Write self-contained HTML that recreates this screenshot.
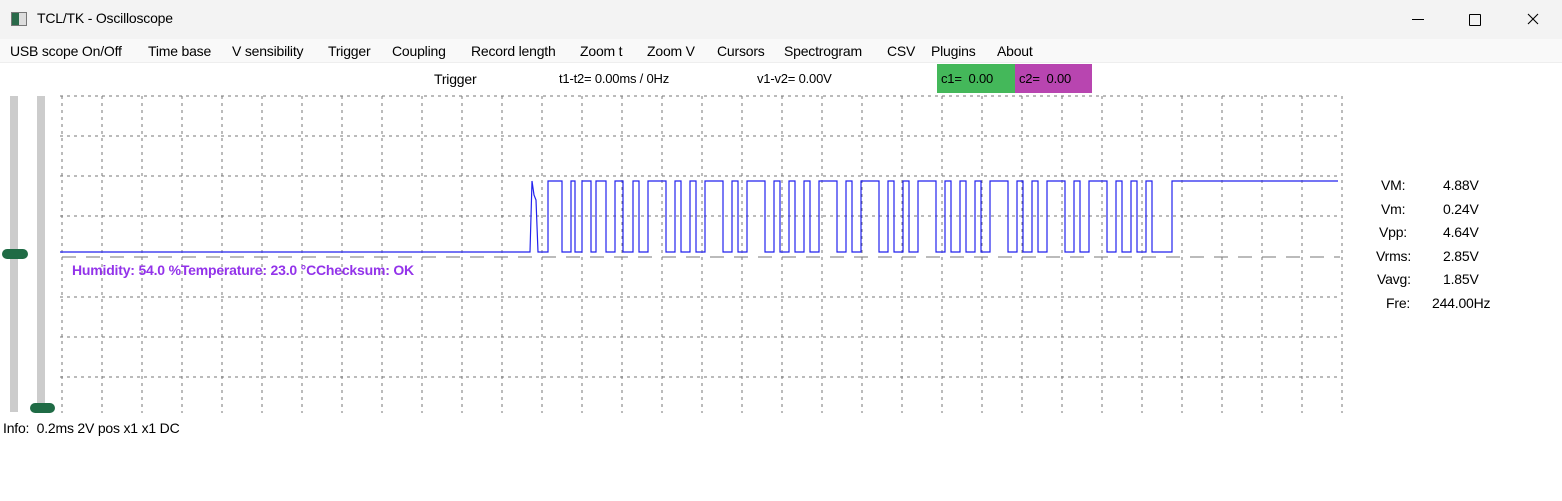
<!DOCTYPE html>
<html><head><meta charset="utf-8"><style>
body{margin:0;width:1562px;height:501px;background:#fff;font-family:"Liberation Sans",sans-serif;overflow:hidden;position:relative}
.t{position:absolute;font-size:14px;color:#000;white-space:nowrap;letter-spacing:-0.2px}
#tb{position:absolute;left:0;top:0;width:1562px;height:39px;background:#f3f3f3}
#mb{position:absolute;left:0;top:39px;width:1562px;height:23px;background:#f9f9f9;border-bottom:1px solid #eee}
</style></head><body>
<div id="tb"></div>
<div style="position:absolute;left:11px;top:12px;width:14px;height:12px;border:1px solid #777;background:#ddd"><div style="width:7px;height:12px;background:#2a6a4a"></div></div>
<div class="t" style="left:37px;top:10px">TCL/TK - Oscilloscope</div>
<div style="position:absolute;left:1412px;top:19px;width:12px;height:1px;background:#000"></div>
<div style="position:absolute;left:1469px;top:14px;width:10px;height:10px;border:1px solid #000;border-radius:1px"></div>
<svg style="position:absolute;left:1527px;top:13px" width="12" height="12"><path d="M1 1L11 11M11 1L1 11" stroke="#000" stroke-width="1.1"/></svg>
<div id="mb"></div>
<div class="t" style="left:10px;top:43px">USB scope On/Off</div>
<div class="t" style="left:148px;top:43px">Time base</div>
<div class="t" style="left:232px;top:43px">V sensibility</div>
<div class="t" style="left:328px;top:43px">Trigger</div>
<div class="t" style="left:392px;top:43px">Coupling</div>
<div class="t" style="left:471px;top:43px">Record length</div>
<div class="t" style="left:580px;top:43px">Zoom t</div>
<div class="t" style="left:647px;top:43px">Zoom V</div>
<div class="t" style="left:717px;top:43px">Cursors</div>
<div class="t" style="left:784px;top:43px">Spectrogram</div>
<div class="t" style="left:887px;top:43px">CSV</div>
<div class="t" style="left:931px;top:43px">Plugins</div>
<div class="t" style="left:997px;top:43px">About</div>
<div class="t" style="left:434px;top:71px">Trigger</div>
<div class="t" style="left:559px;top:71px;font-size:13px">t1-t2= 0.00ms / 0Hz</div>
<div class="t" style="left:757px;top:71px;font-size:13px">v1-v2= 0.00V</div>
<div style="position:absolute;left:937px;top:64px;width:78px;height:29px;background:#44b85a"></div>
<div style="position:absolute;left:1015px;top:64px;width:77px;height:29px;background:#b845b0"></div>
<div class="t" style="left:941px;top:71px;font-size:13px">c1=&nbsp; 0.00</div>
<div class="t" style="left:1019px;top:71px;font-size:13px">c2=&nbsp; 0.00</div>
<div style="position:absolute;left:10px;top:96px;width:8px;height:316px;background:#cccccc"></div>
<div style="position:absolute;left:37px;top:96px;width:8px;height:316px;background:#cccccc"></div>
<div style="position:absolute;left:2px;top:249px;width:26px;height:10px;border-radius:5px;background:#1f6b45"></div>
<div style="position:absolute;left:30px;top:403px;width:25px;height:10px;border-radius:5px;background:#1f6b45"></div>
<svg id="sc" width="1562" height="501" style="position:absolute;left:0;top:0"></svg>
<div class="t" style="left:72px;top:262px;font-weight:bold;color:#9333ea">Humidity: 54.0 %Temperature: 23.0 °CChecksum: OK</div>
<div class="t" style="left:1381px;top:177px">VM:</div><div class="t" style="left:1443px;top:177px">4.88V</div>
<div class="t" style="left:1381px;top:201px">Vm:</div><div class="t" style="left:1443px;top:201px">0.24V</div>
<div class="t" style="left:1379px;top:224px">Vpp:</div><div class="t" style="left:1443px;top:224px">4.64V</div>
<div class="t" style="left:1376px;top:248px">Vrms:</div><div class="t" style="left:1443px;top:248px">2.85V</div>
<div class="t" style="left:1377px;top:271px">Vavg:</div><div class="t" style="left:1443px;top:271px">1.85V</div>
<div class="t" style="left:1386px;top:295px">Fre:</div><div class="t" style="left:1432px;top:295px">244.00Hz</div>
<div class="t" style="left:3px;top:420px">Info:&nbsp; 0.2ms 2V pos x1 x1 DC</div>
<script>
var s='';
for(var x=62;x<=1342;x+=40)s+='<line x1="'+x+'" y1="96" x2="'+x+'" y2="413" stroke="#777" stroke-dasharray="3,4"/>';
[96,136,176,216,297,337,377].forEach(function(y){s+='<line x1="60" y1="'+y+'" x2="1340" y2="'+y+'" stroke="#777" stroke-dasharray="3,4"/>';});
s+='<line x1="62" y1="257" x2="1340" y2="257" stroke="#777" stroke-dasharray="14,10"/>';
var p='M60 252 H530 L532 181 L534 195 L536 200 L538 252 H548 V181 H562 V252 H571 V181 H575 V252 H582 V181 H591 V252 H596 V181 H606 V252 H615 V181 H623 V252';
var x=633,pat=[6,18,6,6,18,6,18,6,6,6,18,6,18,6,6,18,6,6,6,18,6,6,18,6,18,6,6,6,18,6,6,18,6,6,18,6,18,6,6];
var i=0;
while(x<1160){var w=pat[i%pat.length];p+=' H'+x+' V181 H'+(x+w)+' V252';x+=w+9;i++;}
p+=' H1172 V181 H1338';
s+='<path d="'+p+'" fill="none" stroke="#2222ee" stroke-width="1.2"/>';
document.getElementById('sc').innerHTML=s;
</script>
</body></html>
